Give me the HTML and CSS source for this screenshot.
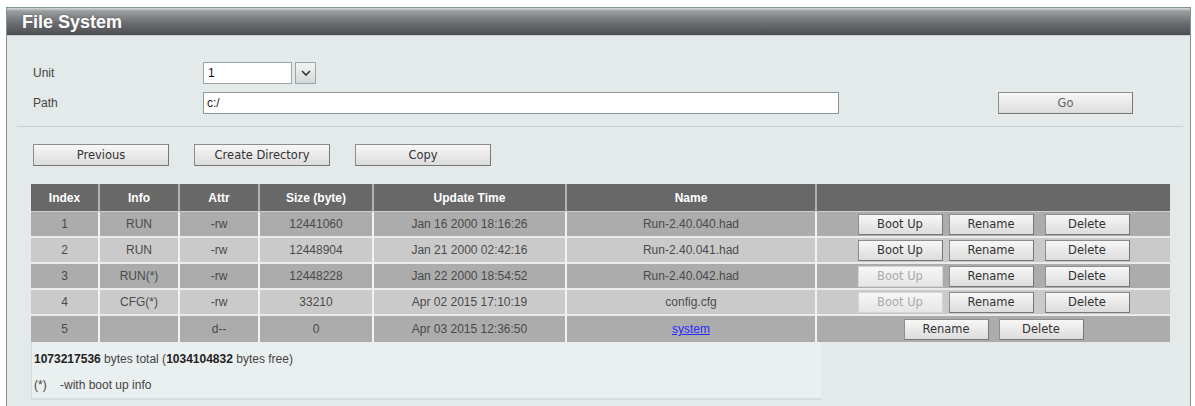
FILE: index.html
```html
<!DOCTYPE html>
<html lang="en">
  <head>
    <meta charset="utf-8">
    <title>File System</title>
    <link rel="stylesheet" href="styles.css">
  </head>
  <body>
    <div class="panel">
      <div class="panel-title">File System</div>
      <div class="panel-body">
        <div class="form-row unit-row">
          <label class="field-label">Unit</label>
          <div class="select">
            <span class="select-value">1</span>
            <span class="select-arrow">
              <svg width="10" height="6" viewBox="0 0 10 6"><path d="M1 1 L5 5 L9 1" fill="none" stroke="#333" stroke-width="1.6"/></svg>
            </span>
          </div>
        </div>
        <div class="form-row path-row">
          <label class="field-label">Path</label>
          <div class="text-input">c:/</div>
          <button class="btn btn-go">Go</button>
        </div>
        <div class="divider"></div>

        <div class="toolbar">
          <button class="btn btn-wide">Previous</button>
          <button class="btn btn-wide">Create Directory</button>
          <button class="btn btn-wide">Copy</button>
        </div>

        <table class="files">
          <thead>
            <tr>
              <th class="c-index">Index</th>
              <th class="c-info">Info</th>
              <th class="c-attr">Attr</th>
              <th class="c-size">Size (byte)</th>
              <th class="c-time">Update Time</th>
              <th class="c-name">Name</th>
              <th class="c-act"></th>
            </tr>
          </thead>
          <tbody>
            <tr class="odd">
              <td>1</td><td>RUN</td><td>-rw</td><td>12441060</td><td>Jan 16 2000 18:16:26</td><td>Run-2.40.040.had</td>
              <td class="actions"><button class="btn btn-row">Boot Up</button><button class="btn btn-row">Rename</button><button class="btn btn-row btn-del">Delete</button></td>
            </tr>
            <tr class="even">
              <td>2</td><td>RUN</td><td>-rw</td><td>12448904</td><td>Jan 21 2000 02:42:16</td><td>Run-2.40.041.had</td>
              <td class="actions"><button class="btn btn-row">Boot Up</button><button class="btn btn-row">Rename</button><button class="btn btn-row btn-del">Delete</button></td>
            </tr>
            <tr class="odd">
              <td>3</td><td>RUN(*)</td><td>-rw</td><td>12448228</td><td>Jan 22 2000 18:54:52</td><td>Run-2.40.042.had</td>
              <td class="actions"><button class="btn btn-row" disabled>Boot Up</button><button class="btn btn-row">Rename</button><button class="btn btn-row btn-del">Delete</button></td>
            </tr>
            <tr class="even">
              <td>4</td><td>CFG(*)</td><td>-rw</td><td>33210</td><td>Apr 02 2015 17:10:19</td><td>config.cfg</td>
              <td class="actions"><button class="btn btn-row" disabled>Boot Up</button><button class="btn btn-row">Rename</button><button class="btn btn-row btn-del">Delete</button></td>
            </tr>
            <tr class="odd">
              <td>5</td><td></td><td>d--</td><td>0</td><td>Apr 03 2015 12:36:50</td><td><a href="#">system</a></td>
              <td class="actions"><button class="btn btn-row">Rename</button><button class="btn btn-row btn-del2">Delete</button></td>
            </tr>
          </tbody>
        </table>

        <div class="summary">
          <p><b>1073217536</b> bytes total (<b>1034104832</b> bytes free)</p>
          <p>(*)&nbsp;&nbsp;&nbsp;&nbsp;-with boot up info</p>
        </div>
      </div>
    </div>
  </body>
</html>
```

FILE: styles.css
```css
* {margin: 0; padding: 0; box-sizing: border-box;}

body {
	background: #ffffff;
	font: 12px "Liberation Sans", Arial, sans-serif;
	color: #444;
}

.panel {
	margin: 7px 4px 0 6px;
	border: 1px solid #7d9497;
	border-bottom: none;
	background: #e4eaea;
}
.panel-title {
	height: 28px;
	padding-left: 15px;
	background: linear-gradient(#d6dada 0, #9a9c9e 12%, #6d6e72 55%, #4c4d52 100%);
	color: #fff;
	font: bold 18px/28px "Liberation Sans", Arial, sans-serif;
	text-shadow: 0 0 2px #555;
	border-bottom: 1px solid #c9d0d0;
}
.panel-body {
	padding: 26px 7px 14px 24px;
}

/* form */
.form-row {
	display: flex;
	align-items: center;
	height: 22px;
}
.path-row {margin-top: 8px;}
.field-label {
	width: 172px;
	padding-left: 2px;
	color: #444;
}
.select {
	display: flex;
	width: 113px;
	height: 22px;
}
.select-value {
	flex: 1;
	background: #fff;
	border: 1px solid #9aa6a6;
	padding-left: 4px;
	line-height: 20px;
	color: #111;
}
.select-arrow {
	width: 21px;
	margin-left: 3px;
	border: 1px solid #9aa6a6;
	background: linear-gradient(#f4f4f4, #d4d8d8);
	display: flex;
	align-items: center;
	justify-content: center;
}
.text-input {
	width: 636px;
	height: 22px;
	background: #fff;
	border: 1px solid #8c9999;
	padding-left: 3px;
	line-height: 20px;
	color: #222;
}
.btn {
	font: 11.5px "DejaVu Sans", Verdana, sans-serif;
	color: #333;
	background: linear-gradient(#f7f7f7, #dcdcdc);
	border: 1px solid #8d8d8d;
	border-right-color: #777;
	border-bottom-color: #777;
	height: 22px;
}
.btn-go {
	width: 135px;
	margin-left: 159px;
	color: #666;
}
.divider {
	height: 1px;
	background: #c6d0d0;
	margin: 12px 0 0 -14px;
}

.toolbar {
	display: flex;
	gap: 25px;
	margin: 17px 0 0 2px;
}
.btn-wide {width: 136px;}

/* table */
.files {
	margin-top: 18px;
	border-collapse: separate;
	border-spacing: 0;
	width: 1139px;
	table-layout: fixed;
}
.files th, .files td {
	border-right: 2px solid #f2f4f4;
	text-align: center;
	white-space: nowrap;
}
.files th:last-child, .files td:last-child {border-right: none;}
.files th {
	height: 28px;
	background: #686868;
	color: #fff;
	font: bold 12px "Liberation Sans", Arial, sans-serif;
	border-right-color: #b0b0b0;
	border-bottom: 1px solid #d0d0d0;
}
.files td {
	height: 26px;
	font-size: 12px;
	color: #4a4a4a;
	border-bottom: 2px solid #e9ecec;
}
.files tr:last-child td {border-bottom: none;}
.odd td {background: #acacac;}
.even td {background: #cacaca;}
.c-index {width: 69px;}
.c-info {width: 80px;}
.c-attr {width: 80px;}
.c-size {width: 114px;}
.c-time {width: 193px;}
.c-name {width: 250px;}
.files a {color: #2a2aff;}

.actions {font-size: 0;}
.btn-row {
	width: 85px;
	height: 21px;
	margin-right: 6px;
	vertical-align: middle;
}
.btn-row:last-child {margin-right: 0;}
.btn-del {margin-left: 5px;}
.btn-del2 {margin-left: 4px;}
.btn-row:disabled {
	color: #aaa;
	border-color: #d4d4d4;
	background: linear-gradient(#f6f6f6, #e6e6e6);
}

.summary {
	width: 790px;
	padding: 4px 0 0 2px;
	border-left: 1px solid #d4dada;
	border-bottom: 2px solid #d8dede;
	background: #eaefef;
	line-height: 26px;
	font-size: 12px;
	color: #444;
}
.summary b {color: #222;}
```
